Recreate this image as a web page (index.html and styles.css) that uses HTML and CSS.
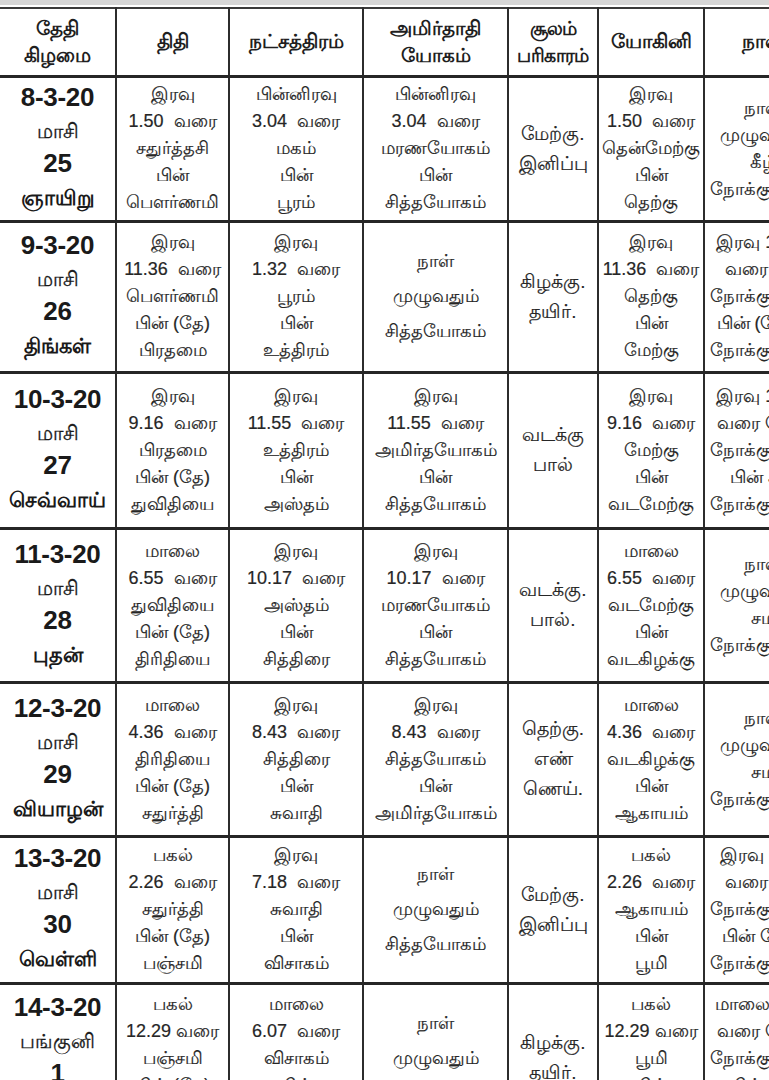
FILE: index.html
```html
<!DOCTYPE html>
<html lang="ta">
<head>
<meta charset="utf-8">
<title>பஞ்சாங்கம்</title>
<link rel="stylesheet" href="styles.css">
</head>
<body>
<div class="topband"></div>
<div class="sheet">
<table class="panchang">
  <colgroup>
    <col class="c-date"><col class="c-thithi"><col class="c-star"><col class="c-yogam"><col class="c-soolam"><col class="c-yogini"><col class="c-naal">
  </colgroup>
  <thead>
    <tr class="head">
      <th>தேதி<br>கிழமை</th>
      <th>திதி</th>
      <th>நட்சத்திரம்</th>
      <th>அமிர்தாதி<br>யோகம்</th>
      <th class="tight">சூலம்<br>பரிகாரம்</th>
      <th>யோகினி</th>
      <th>நாள்</th>
    </tr>
  </thead>
  <tbody>
    <tr class="r1">
      <td class="date"><b>8-3-20</b><br><span class="month">மாசி</span><br><b>25</b><br><b class="day">ஞாயிறு</b></td>
      <td>இரவு<br>1.50&nbsp;&nbsp;வரை<br>சதுர்த்தசி<br>பின்<br>பௌர்ணமி</td>
      <td>பின்னிரவு<br>3.04&nbsp;&nbsp;வரை<br>மகம்<br>பின்<br>பூரம்</td>
      <td>பின்னிரவு<br>3.04&nbsp;&nbsp;வரை<br>மரணயோகம்<br>பின்<br>சித்தயோகம்</td>
      <td class="soolam">மேற்கு.<br>இனிப்பு</td>
      <td>இரவு<br>1.50&nbsp;&nbsp;வரை<br>தென்மேற்கு<br>பின்<br>தெற்கு</td>
      <td class="naal">நாள்<br>முழுவதும்<br>கீழ்<br>நோக்கு நாள்</td>
    </tr>
    <tr class="r2">
      <td class="date"><b>9-3-20</b><br><span class="month">மாசி</span><br><b>26</b><br><b class="day">திங்கள்</b></td>
      <td>இரவு<br>11.36&nbsp;&nbsp;வரை<br>பௌர்ணமி<br>பின் (தே)<br>பிரதமை</td>
      <td>இரவு<br>1.32&nbsp;&nbsp;வரை<br>பூரம்<br>பின்<br>உத்திரம்</td>
      <td class="three">நாள்<br>முழுவதும்<br>சித்தயோகம்</td>
      <td class="soolam">கிழக்கு.<br>தயிர்.</td>
      <td>இரவு<br>11.36&nbsp;&nbsp;வரை<br>தெற்கு<br>பின்<br>மேற்கு</td>
      <td class="naal">இரவு 11.36<br>வரை கீழ்<br>நோக்கு நாள்<br>பின் (மேல்)<br>நோக்கு நாள்</td>
    </tr>
    <tr class="r3">
      <td class="date"><b>10-3-20</b><br><span class="month">மாசி</span><br><b>27</b><br><b class="day">செவ்வாய்</b></td>
      <td>இரவு<br>9.16&nbsp;&nbsp;வரை<br>பிரதமை<br>பின் (தே)<br>துவிதியை</td>
      <td>இரவு<br>11.55&nbsp;&nbsp;வரை<br>உத்திரம்<br>பின்<br>அஸ்தம்</td>
      <td>இரவு<br>11.55&nbsp;&nbsp;வரை<br>அமிர்தயோகம்<br>பின்<br>சித்தயோகம்</td>
      <td class="soolam">வடக்கு<br>பால்</td>
      <td>இரவு<br>9.16&nbsp;&nbsp;வரை<br>மேற்கு<br>பின்<br>வடமேற்கு</td>
      <td class="naal">இரவு 11.55<br>வரை மேல்<br>நோக்கு நாள்<br>பின் கீழ்<br>நோக்கு நாள்</td>
    </tr>
    <tr class="r4">
      <td class="date"><b>11-3-20</b><br><span class="month">மாசி</span><br><b>28</b><br><b class="day">புதன்</b></td>
      <td>மாலை<br>6.55&nbsp;&nbsp;வரை<br>துவிதியை<br>பின் (தே)<br>திரிதியை</td>
      <td>இரவு<br>10.17&nbsp;&nbsp;வரை<br>அஸ்தம்<br>பின்<br>சித்திரை</td>
      <td>இரவு<br>10.17&nbsp;&nbsp;வரை<br>மரணயோகம்<br>பின்<br>சித்தயோகம்</td>
      <td class="soolam">வடக்கு.<br>பால்.</td>
      <td>மாலை<br>6.55&nbsp;&nbsp;வரை<br>வடமேற்கு<br>பின்<br>வடகிழக்கு</td>
      <td class="naal">நாள்<br>முழுவதும்<br>சம<br>நோக்கு நாள்</td>
    </tr>
    <tr class="r5">
      <td class="date"><b>12-3-20</b><br><span class="month">மாசி</span><br><b>29</b><br><b class="day">வியாழன்</b></td>
      <td>மாலை<br>4.36&nbsp;&nbsp;வரை<br>திரிதியை<br>பின் (தே)<br>சதுர்த்தி</td>
      <td>இரவு<br>8.43&nbsp;&nbsp;வரை<br>சித்திரை<br>பின்<br>சுவாதி</td>
      <td>இரவு<br>8.43&nbsp;&nbsp;வரை<br>சித்தயோகம்<br>பின்<br>அமிர்தயோகம்</td>
      <td class="soolam">தெற்கு.<br>எண்<br>ணெய்.</td>
      <td>மாலை<br>4.36&nbsp;&nbsp;வரை<br>வடகிழக்கு<br>பின்<br>ஆகாயம்</td>
      <td class="naal">நாள்<br>முழுவதும்<br>சம<br>நோக்கு நாள்</td>
    </tr>
    <tr class="r6">
      <td class="date"><b>13-3-20</b><br><span class="month">மாசி</span><br><b>30</b><br><b class="day">வெள்ளி</b></td>
      <td>பகல்<br>2.26&nbsp;&nbsp;வரை<br>சதுர்த்தி<br>பின் (தே)<br>பஞ்சமி</td>
      <td>இரவு<br>7.18&nbsp;&nbsp;வரை<br>சுவாதி<br>பின்<br>விசாகம்</td>
      <td class="three">நாள்<br>முழுவதும்<br>சித்தயோகம்</td>
      <td class="soolam">மேற்கு.<br>இனிப்பு</td>
      <td>பகல்<br>2.26&nbsp;&nbsp;வரை<br>ஆகாயம்<br>பின்<br>பூமி</td>
      <td class="naal">இரவு 7.18<br>வரை கீழ்<br>நோக்கு நாள்<br>பின் மேல்<br>நோக்கு நாள்</td>
    </tr>
    <tr class="r7">
      <td class="date"><b>14-3-20</b><br><span class="month">பங்குனி</span><br><b>1</b><br><b class="day">சனி</b></td>
      <td>பகல்<br>12.29 வரை<br>பஞ்சமி<br>பின் (தே)<br>சஷ்டி</td>
      <td>மாலை<br>6.07&nbsp;&nbsp;வரை<br>விசாகம்<br>பின்<br>அனுஷம்</td>
      <td class="three">நாள்<br>முழுவதும்<br>சித்தயோகம்</td>
      <td class="soolam">கிழக்கு.<br>தயிர்.</td>
      <td>பகல்<br>12.29 வரை<br>பூமி<br>பின்<br>பஞ்சமி</td>
      <td class="naal">மாலை 6.07<br>வரை மேல்<br>நோக்கு நாள்<br>பின் கீழ்<br>நோக்கு நாள்</td>
    </tr>
  </tbody>
</table>
</div>
</body>
</html>
```
FILE: styles.css
```css
html, body {
  margin: 0;
  padding: 0;
  background: #ffffff;
  overflow: hidden;
}

body {
  width: 769px;
  font-family: "Liberation Sans", "Noto Sans", sans-serif;
  color: #1e1e1e;
}

.topband {
  height: 5px;
  background: #d6d6d6;
  margin-bottom: 2px;
}

.sheet {
  width: 769px;
  overflow: hidden;
}

.panchang {
  width: 820px;
  table-layout: fixed;
  border-collapse: collapse;
  border-top: 2px solid #3a3a3a;
}

.c-date   { width: 116px; }
.c-thithi { width: 113px; }
.c-star   { width: 134px; }
.c-yogam  { width: 145px; }
.c-soolam { width: 90px; }
.c-yogini { width: 106px; }
.c-naal   { width: 116px; }

.panchang th,
.panchang td {
  padding: 0 1px;
  text-align: center;
  vertical-align: middle;
  border-left: 2px solid #2c2c2c;
  border-bottom: 3px solid #262626;
  overflow: hidden;
  white-space: nowrap;
}

.panchang th:first-child,
.panchang td:first-child {
  border-left: none;
}

.head {
  height: 68px;
}

.head th {
  font-size: 20px;
  font-weight: bold;
  line-height: 27px;
  color: #1f1f1f;
}

.head th.tight {
  font-size: 19px;
  letter-spacing: -0.8px;
}

.panchang td {
  font-size: 18px;
  line-height: 27px;
  color: #262626;
  -webkit-text-stroke: 0.2px #262626;
}

.panchang td.three {
  line-height: 35px;
}

.panchang td.soolam {
  font-size: 19px;
  line-height: 30px;
}

.panchang td.date {
  line-height: 31px;
  color: #1a1a1a;
  -webkit-text-stroke: 0;
}

.date b {
  font-size: 26px;
  font-weight: bold;
  letter-spacing: -0.3px;
}

.date .month {
  font-size: 20px;
  -webkit-text-stroke: 0.3px #1a1a1a;
}

.date b.day {
  font-size: 21px;
  letter-spacing: 0;
}

.r1 { height: 145px; }
.r2 { height: 151px; }
.r3 { height: 156px; }
.r4 { height: 154px; }
.r5 { height: 154px; }
.r6 { height: 147px; }
.r7 { height: 150px; }
```
